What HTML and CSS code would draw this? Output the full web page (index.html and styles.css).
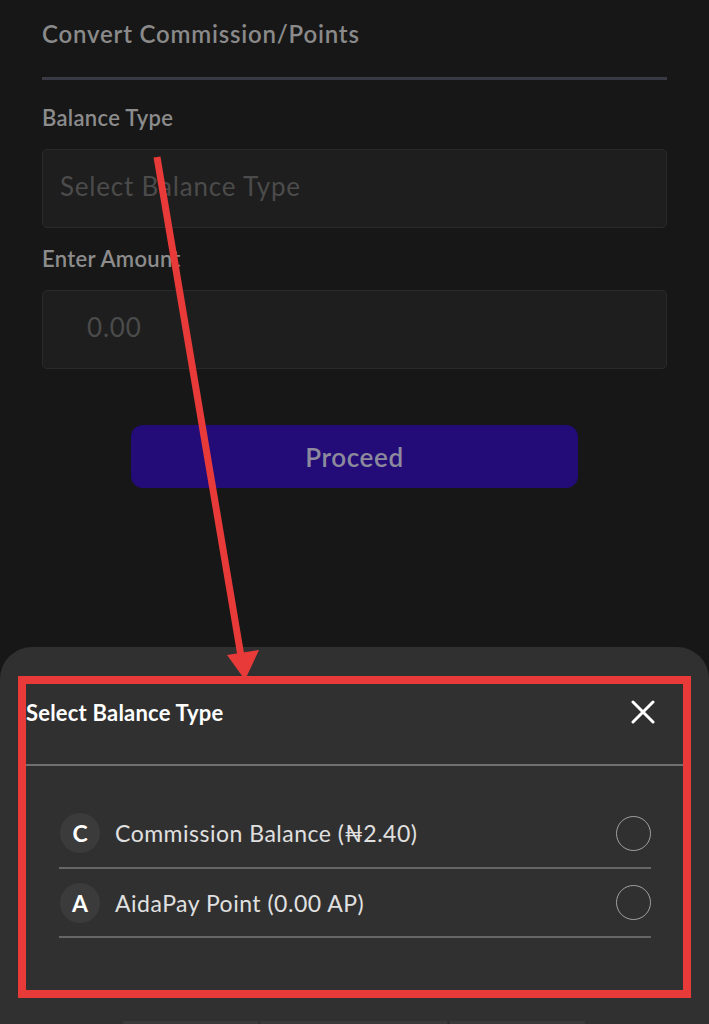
FILE: index.html
```html
<!DOCTYPE html>
<html>
<head>
    <meta charset="UTF-8">
    <meta name="viewport" content="width=device-width, initial-scale=1.0">
    <title>Convert Commission/Points</title>
    <link rel="stylesheet" href="styles.css">
</head>
<body>
    <div class="page">
        <div class="container">
            <div class="header">
                <h1>Convert Commission/Points</h1>
            </div>

            <div class="form-group">
                <label class="form-label">Balance Type</label>
                <div class="form-input placeholder">Select Balance Type</div>
            </div>

            <div class="form-group">
                <label class="form-label">Enter Amount</label>
                <div class="form-input placeholder amount">0.00</div>
            </div>

            <button class="button">Proceed</button>
        </div>

        <div class="sheet">
            <div class="highlight">
                <div class="sheet-header">
                    <span class="sheet-title">Select Balance Type</span>
                    <svg class="close" width="24" height="24" viewBox="0 0 24 24">
                        <path d="M2 2 L22 22 M22 2 L2 22" stroke="#fff" stroke-width="3" stroke-linecap="round"/>
                    </svg>
                </div>
                <div class="option-list">
                    <div class="option">
                        <span class="avatar">C</span>
                        <span class="option-text">Commission Balance (₦2.40)</span>
                        <span class="radio"></span>
                    </div>
                    <div class="option">
                        <span class="avatar">A</span>
                        <span class="option-text">AidaPay Point (0.00 AP)</span>
                        <span class="radio"></span>
                    </div>
                </div>
            </div>
            <div class="tabs">
                <span class="tab t1"></span>
                <span class="tab t2"></span>
                <span class="tab t3"></span>
            </div>
        </div>

        <!-- annotation arrow drawn over the screen -->
        <svg class="arrow" width="709" height="1024" viewBox="0 0 709 1024">
            <line x1="157" y1="157" x2="242" y2="662" stroke="#e93a3a" stroke-width="7"/>
            <polygon points="227,655 259,650 245,680" fill="#e93a3a"/>
        </svg>
    </div>
</body>
</html>
```

FILE: styles.css
```css
html,
body {
    margin: 0;
    padding: 0;
}

body {
    font-family: Lato, "Noto Sans", sans-serif;
    background-color: #171717;
    width: 709px;
    height: 1024px;
    overflow: hidden;
}

.page {
    position: relative;
    height: 1024px;
    overflow: hidden;
}

.container {
    padding: 0 42px;
}

.header {
    padding-top: 20px;
    height: 57px;
    border-bottom: 3px solid #3a3a44;
}

.header h1 {
    margin: 0;
    font-size: 24px;
    line-height: 28px;
    font-weight: 600;
    color: #8a8a8a;
    letter-spacing: 0.8px;
}

.form-group {
    margin-top: 24px;
}

.form-group + .form-group {
    margin-top: 17px;
}

.form-label {
    display: block;
    font-size: 22px;
    line-height: 28px;
    font-weight: 600;
    color: #8c8c8c;
    margin-bottom: 17px;
    letter-spacing: 0.3px;
}

.form-input {
    box-sizing: border-box;
    height: 79px;
    border: 1px solid #2a2a2a;
    border-radius: 5px;
    background-color: #1e1e1e;
    display: flex;
    align-items: center;
    padding-left: 17px;
    padding-bottom: 5px;
}

.placeholder {
    font-size: 26px;
    color: #4b4b4b;
    letter-spacing: 0.8px;
}

.amount {
    padding-left: 44px;
}

.button {
    display: block;
    width: 447px;
    height: 63px;
    margin: 56px auto 0;
    background-color: #230c78;
    border: none;
    border-radius: 12px;
    font-family: Lato, "Noto Sans", sans-serif;
    font-size: 26px;
    font-weight: 600;
    color: #8c8a9c;
    letter-spacing: 0.6px;
}

.sheet {
    margin-top: 159px;
    background-color: #303030;
    border-radius: 32px 32px 0 0;
    padding: 29px 18px 0;
    height: 348px;
}

.highlight {
    border: 8px solid #e93a3a;
}

.sheet-header {
    height: 56px;
    display: flex;
    align-items: center;
    justify-content: space-between;
    padding-right: 28px;
    padding-bottom: 24px;
    border-bottom: 2px solid #707070;
}

.sheet-title {
    font-size: 22px;
    font-weight: 700;
    color: #fff;
    letter-spacing: 0.2px;
}

.close {
    display: block;
}

.option-list {
    padding: 33px 32px 52px 33px;
}

.option {
    display: flex;
    align-items: center;
    height: 67px;
    border-bottom: 2px solid #666;
}

.option:first-child {
    height: 68px;
}

.avatar {
    width: 40px;
    height: 40px;
    border-radius: 50%;
    background-color: #3b3b3b;
    color: #fff;
    font-size: 23px;
    font-weight: 700;
    display: flex;
    align-items: center;
    justify-content: center;
    margin-left: 1px;
}

.option-text {
    flex: 1;
    margin-left: 15px;
    font-size: 23px;
    color: #e0e0e0;
    letter-spacing: 0.5px;
}

.radio {
    width: 33px;
    height: 33px;
    border: 1.5px solid #a0a0a0;
    border-radius: 50%;
}

.tabs {
    position: relative;
    height: 4px;
    margin-top: 23px;
}

.tab {
    position: absolute;
    top: 0;
    height: 4px;
    background-color: #3a3a3a;
}

.t1 {
    left: 105px;
    width: 135px;
}

.t2 {
    left: 242px;
    width: 187px;
}

.t3 {
    left: 432px;
    width: 135px;
}

.arrow {
    position: absolute;
    left: 0;
    top: 0;
    pointer-events: none;
}
```
